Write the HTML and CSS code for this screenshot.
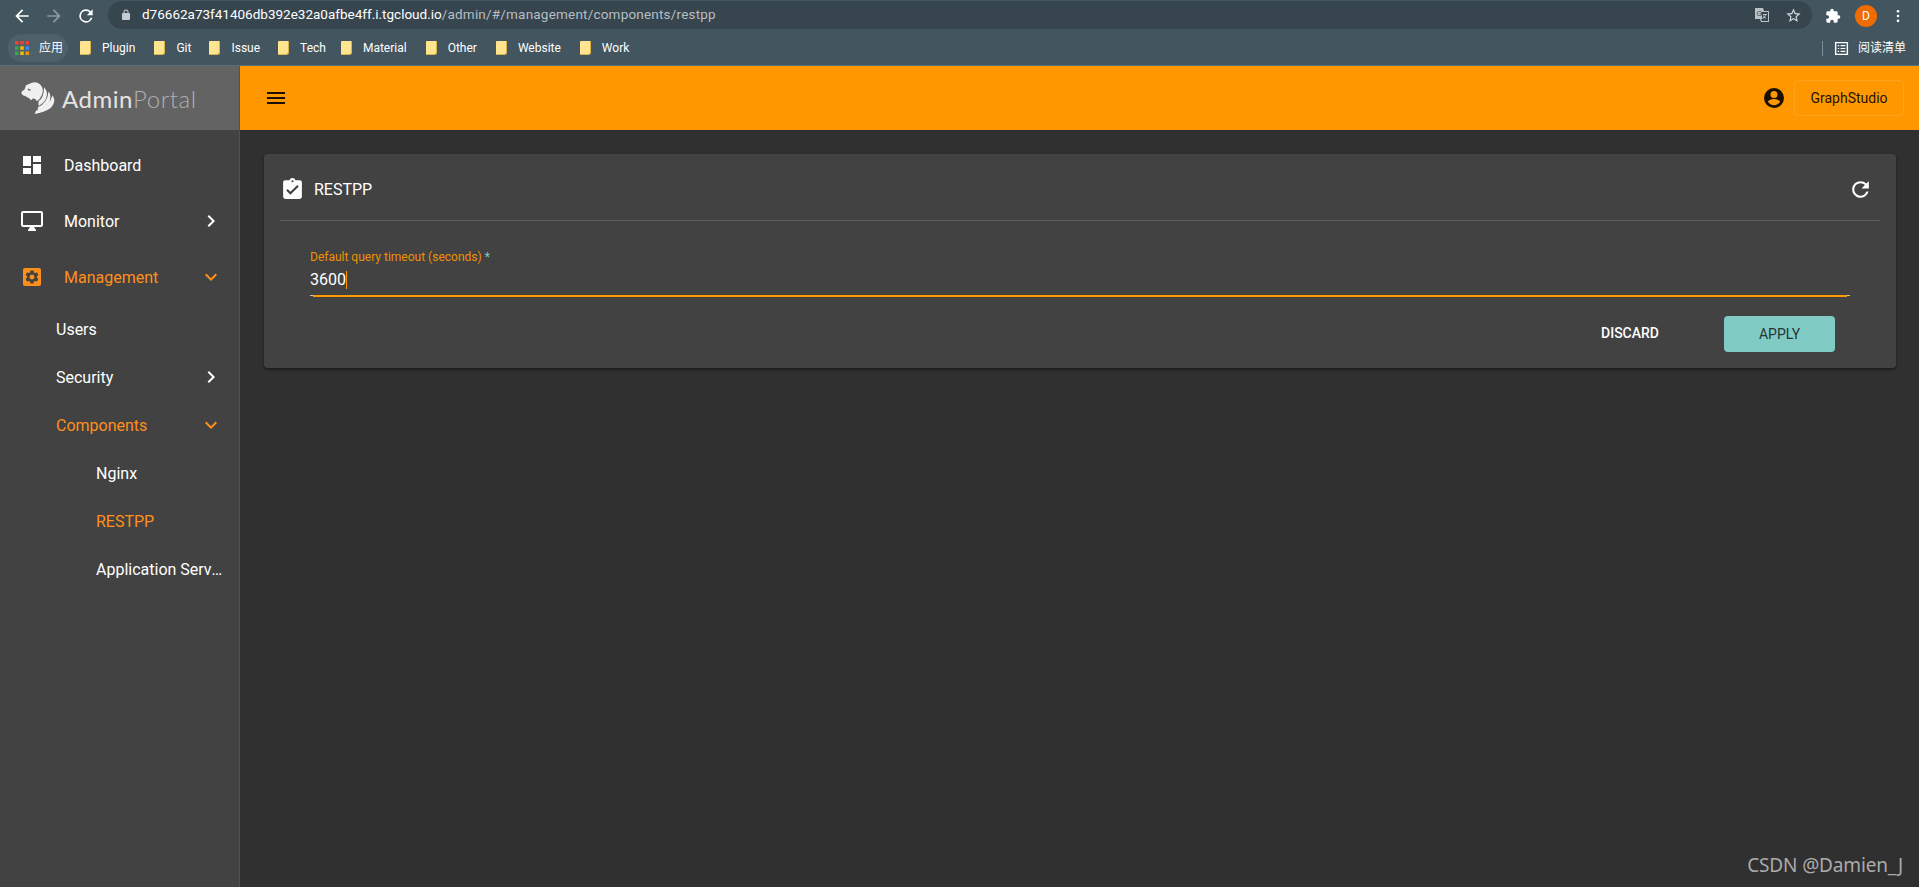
FILE: index.html
```html
<!DOCTYPE html>
<html lang="en">
<head>
<meta charset="utf-8">
<title>RESTPP - AdminPortal</title>
<link rel="stylesheet" href="styles.css">
</head>
<body>
<div class="chrome">
  <div class="toolbar">
    <div class="nav-btns">
      <svg class="ic20" viewBox="0 0 24 24"><path fill="#fff" d="M20 11H7.800l5.600-5.600L12 4l-8 8 8 8 1.400-1.400L7.800 13H20z"/></svg>
      <svg class="ic20" viewBox="0 0 24 24"><path fill="#8d9aa2" d="M4 11h12.200l-5.600-5.600L12 4l8 8-8 8-1.400-1.400 5.600-5.600H4z"/></svg>
      <svg class="ic20" viewBox="0 0 24 24"><path fill="#fff" d="M17.650 6.350A8 8 0 1 0 19.730 14h-2.080A6 6 0 1 1 12 6c1.660 0 3.140.69 4.220 1.780L13 11h7V4z"/></svg>
    </div>
    <div class="omnibox">
      <svg class="lock" viewBox="0 0 24 24"><path fill="#c4ccd1" d="M18 8h-1V6a5 5 0 0 0-10 0v2H6a2 2 0 0 0-2 2v10a2 2 0 0 0 2 2h12a2 2 0 0 0 2-2V10a2 2 0 0 0-2-2zM9 6a3 3 0 0 1 6 0v2H9z"/></svg>
      <span class="url"><span class="host">d76662a73f41406db392e32a0afbe4ff.i.tgcloud.io</span><span class="path">/admin/#/management/components/restpp</span></span>
      <svg class="translate" viewBox="0 0 16 16"><path fill="#b9c1c6" d="M1 1h8l1 3h5v11H7l-1-3H1z"/><path fill="#37454e" d="M7 5h7v9H8l-1-2h1.500z"/><text x="2.400" y="9" class="tr-g">G</text><path fill="#b9c1c6" d="M9 7h4v1h-1a5 5 0 0 1-1 2l1 1-.6.7-1-1-1.200 1-.6-.7 1.200-1a4 4 0 0 1-.8-1.500h1a3 3 0 0 0 .5 1 3 3 0 0 0 .6-1.500H9z"/></svg>
      <svg class="star" viewBox="0 0 24 24"><path fill="#d5dade" d="M22 9.240l-7.190-.62L12 2 9.190 8.630 2 9.240l5.460 4.730L5.820 21 12 17.270 18.180 21l-1.630-7.030zM12 15.400l-3.760 2.270 1-4.280-3.320-2.880 4.380-.38L12 6.100l1.710 4.040 4.380.38-3.320 2.880 1 4.280z"/></svg>
    </div>
    <div class="ext">
      <svg class="ic16" viewBox="0 0 24 24"><path fill="#fff" d="M20.500 11H19V7a2 2 0 0 0-2-2h-4V3.500a2.500 2.500 0 0 0-5 0V5H4a2 2 0 0 0-2 2v3.800h1.500a2.700 2.700 0 0 1 0 5.400H2V20a2 2 0 0 0 2 2h3.800v-1.500a2.700 2.700 0 0 1 5.400 0V22H17a2 2 0 0 0 2-2v-4h1.500a2.500 2.500 0 0 0 0-5z"/></svg>
      <span class="avatar">D</span>
      <svg class="dots" viewBox="0 0 4 16"><circle cx="2" cy="2.500" r="1.500"/><circle cx="2" cy="8" r="1.500"/><circle cx="2" cy="13.500" r="1.500"/></svg>
    </div>
  </div>
  <div class="bookmarks">
    <span class="apps">
      <svg class="apps-grid" viewBox="0 0 12 12">
        <rect x="0" y="0" width="3" height="3" fill="#ea4335"/><rect x="4.500" y="0" width="3" height="3" fill="#ea4335"/><rect x="9" y="0" width="3" height="3" fill="#ea4335"/>
        <rect x="0" y="4.500" width="3" height="3" fill="#34a853"/><rect x="4.500" y="4.500" width="3" height="3" fill="#fbbc05"/><rect x="9" y="4.500" width="3" height="3" fill="#4285f4"/>
        <rect x="0" y="9" width="3" height="3" fill="#34a853"/><rect x="4.500" y="9" width="3" height="3" fill="#fbbc05"/><rect x="9" y="9" width="3" height="3" fill="#f59300"/>
      </svg>应用
    </span>
    <span class="bm"><i class="folder"></i>Plugin</span>
    <span class="bm bm-narrow"><i class="folder"></i>Git</span>
    <span class="bm bm-narrow"><i class="folder"></i>Issue</span>
    <span class="bm bm-tight"><i class="folder"></i>Tech</span>
    <span class="bm"><i class="folder"></i>Material</span>
    <span class="bm"><i class="folder"></i>Other</span>
    <span class="bm"><i class="folder"></i>Website</span>
    <span class="bm"><i class="folder"></i>Work</span>
    <span class="reading">
      <svg class="ic15" viewBox="0 0 16 16"><path fill="none" stroke="#fff" stroke-width="1.500" d="M1.750 1.750h12.500v12.500H1.750z"/><path stroke="#fff" stroke-width="1.300" d="M4 5h1.500M7 5h5M4 8h1.500M7 8h5M4 11h1.500M7 11h5"/></svg>阅读清单
    </span>
  </div>
</div>

<div class="app">
  <aside class="sidebar">
    <div class="brand">
      <svg class="tiger" viewBox="0 0 132 120">
        <path fill="#f0f0f0" fill-rule="evenodd" d="M30 22 48 14Q66 10 76 24 84 36 78 50 72 64 62 70 60 60 50 62 42 70 42 62 30 54 18 50L16 42 26 34ZM34 31 47 36 38 38Z"/>
        <path fill="#f0f0f0" d="M84 28Q100 44 88 66 82 76 68 84 66 76 68 70 84 60 84 28Z"/>
        <path fill="#f0f0f0" d="M98 40Q110 58 96 78 84 92 66 100 64 94 66 88 94 76 98 40Z"/>
        <path fill="#f0f0f0" d="M110 52Q122 72 104 90 84 104 56 108 58 102 60 98 100 86 110 52Z"/>
      </svg>
      <span class="brand-text"><span class="admin">Admin</span><span class="portal">Portal</span></span>
    </div>
    <nav class="nav">
      <a class="item"><svg class="nav-ic" viewBox="0 0 24 24"><path d="M3 13h8V3H3zm0 8h8v-6H3zm10 0h8V11h-8zm0-18v6h8V3z"/></svg><span class="label">Dashboard</span></a>
      <a class="item"><svg class="nav-ic" viewBox="0 0 24 24"><path d="M21 2H3a2 2 0 0 0-2 2v12a2 2 0 0 0 2 2h7l-2 3v1h8v-1l-2-3h7a2 2 0 0 0 2-2V4a2 2 0 0 0-2-2zm0 14H3V4h18z"/></svg><span class="label">Monitor</span><svg class="chev" viewBox="0 0 24 24"><path d="M10 6 8.590 7.410 13.170 12l-4.580 4.590L10 18l6-6z"/></svg></a>
      <a class="item active"><svg class="nav-ic" viewBox="0 0 24 24"><rect x="3" y="3" width="18" height="18" rx="2"/><path class="gear" transform="translate(12 12) scale(.68) translate(-12 -12)" d="M19.140 12.940c.04-.3.06-.61.06-.94 0-.32-.02-.64-.07-.94l2.030-1.580c.18-.14.23-.41.12-.61l-1.920-3.320c-.12-.22-.37-.29-.59-.22l-2.390.96c-.5-.38-1.030-.7-1.620-.94l-.36-2.540c-.04-.24-.24-.41-.48-.41h-3.840c-.24 0-.43.17-.47.41l-.36 2.540c-.59.24-1.130.57-1.620.94l-2.390-.96c-.22-.08-.47 0-.59.22L2.740 8.870c-.12.21-.08.47.12.61l2.030 1.580c-.05.3-.09.63-.09.94s.02.64.07.94l-2.030 1.580c-.18.14-.23.41-.12.61l1.920 3.320c.12.22.37.29.59.22l2.390-.96c.5.38 1.030.7 1.620.94l.36 2.540c.05.24.24.41.48.41h3.840c.24 0 .44-.17.47-.41l.36-2.540c.59-.24 1.130-.56 1.620-.94l2.390.96c.22.08.47 0 .59-.22l1.920-3.320c.12-.22.07-.47-.12-.61l-2.010-1.580zM12 15.600c-1.980 0-3.600-1.620-3.600-3.600s1.620-3.600 3.600-3.600 3.600 1.620 3.600 3.600-1.620 3.600-3.600 3.600z"/></svg><span class="label">Management</span><svg class="chev" viewBox="0 0 24 24"><path d="M16.590 8.590 12 13.170 7.410 8.590 6 10l6 6 6-6z"/></svg></a>
      <a class="sub"><span class="label">Users</span></a>
      <a class="sub"><span class="label">Security</span><svg class="chev" viewBox="0 0 24 24"><path d="M10 6 8.590 7.410 13.170 12l-4.580 4.590L10 18l6-6z"/></svg></a>
      <a class="sub active"><span class="label">Components</span><svg class="chev" viewBox="0 0 24 24"><path d="M16.590 8.590 12 13.170 7.410 8.590 6 10l6 6 6-6z"/></svg></a>
      <a class="subsub"><span class="label">Nginx</span></a>
      <a class="subsub active"><span class="label">RESTPP</span></a>
      <a class="subsub"><span class="label">Application Server</span></a>
    </nav>
  </aside>
  <div class="right">
    <header class="topbar">
      <svg class="menu" viewBox="0 0 24 24"><path d="M3 18h18v-2H3zm0-5h18v-2H3zm0-7v2h18V6z"/></svg>
      <div class="top-actions">
        <svg class="account" viewBox="0 0 24 24"><path d="M12 2a10 10 0 1 0 0 20 10 10 0 0 0 0-20zm0 3a3.500 3.500 0 1 1 0 7 3.500 3.500 0 0 1 0-7zm0 14.200a7.500 7.500 0 0 1-6-3.200c0-2 4-3.100 6-3.100s6 1.100 6 3.100a7.500 7.500 0 0 1-6 3.200z"/></svg>
        <button class="gs">GraphStudio</button>
      </div>
    </header>
    <main class="main">
      <section class="card">
        <div class="card-head">
          <svg class="head-ic" viewBox="0 0 24 24"><path fill="#fff" d="M19 3h-4.180C14.400 1.840 13.300 1 12 1s-2.400.84-2.820 2H5a2 2 0 0 0-2 2v14a2 2 0 0 0 2 2h14a2 2 0 0 0 2-2V5a2 2 0 0 0-2-2zm-7 0a1 1 0 1 1 0 2 1 1 0 0 1 0-2z"/><path fill="#424242" d="m10 17-4-4 1.410-1.410L10 14.170l6.590-6.590L18 9z"/></svg>
          <h1 class="title">RESTPP</h1>
          <svg class="refresh" viewBox="0 0 24 24"><path fill="#fff" d="M17.650 6.350A7.960 7.960 0 0 0 12 4a8 8 0 1 0 7.730 10h-2.080A6 6 0 1 1 12 6c1.660 0 3.140.69 4.220 1.780L13 11h7V4z"/></svg>
        </div>
        <div class="card-body">
          <div class="field">
            <div class="field-label">Default query timeout (seconds) <span class="req">*</span></div>
            <div class="field-value">3600<i class="caret"></i></div>
            <div class="underline"></div>
          </div>
          <div class="actions">
            <button class="discard">DISCARD</button>
            <button class="apply">APPLY</button>
          </div>
        </div>
      </section>
    </main>
  </div>
</div>
<div class="watermark">CSDN @Damien_J</div>
</body>
</html>
```
FILE: styles.css
```css
* { box-sizing: border-box; }
html, body { margin: 0; height: 100%; }
body {
  display: flex;
  flex-direction: column;
  height: 887px;
  overflow: hidden;
  font-family: Roboto, "Noto Sans CJK SC", sans-serif;
  background: #303030;
  color: #fff;
  position: relative;
}
svg { display: block; flex: none; }
.ic16 { width: 16px; height: 16px; }
.ic15 { width: 15px; height: 15px; }
.ic20 { width: 20px; height: 20px; }

.chrome { flex: none; height: 66px; background: #43555f; border-bottom: 1px solid #5c6d77; }
.toolbar { height: 31px; display: flex; align-items: center; padding-left: 12px; }
.nav-btns { display: flex; gap: 12px; width: 96px; }
.omnibox {
  width: 1704px; height: 28px; margin-top: -1px;
  background: #37454e; border-radius: 14px;
  display: flex; align-items: center; padding-left: 12px;
}
.lock { width: 12px; height: 12px; }
.url { font: 13.500px/1 Roboto, sans-serif; margin-left: 10px; flex: 1; white-space: nowrap; }
.host { color: #fff; }
.path { color: #b6bec3; letter-spacing: .2px; }
.translate { width: 16px; height: 16px; margin-right: 15px; }
.tr-g { font: 7px "Liberation Sans", sans-serif; fill: #37454e; }
.star { width: 17px; height: 17px; margin-right: 10px; }
.ext { display: flex; align-items: center; margin-left: 13px; }
.avatar {
  width: 22px; height: 22px; border-radius: 50%; background: #ef6c00;
  font: 12px/22px Roboto, sans-serif; text-align: center; margin-left: 14px;
}
.dots { width: 4px; height: 14px; margin-left: 19px; fill: #fff; }

.bookmarks {
  height: 34px; display: flex; align-items: center; padding-left: 8px;
  font: 12px/1 Roboto, "Noto Sans CJK SC", sans-serif; color: #fff;
}
.apps {
  display: flex; align-items: center; gap: 10px; height: 28px; width: 60px;
  background: #4e606a; border-radius: 14px; padding-left: 7px; margin-right: 12px;
}
.apps-grid { width: 14px; height: 14px; }
.bm { display: flex; align-items: center; margin-right: 19px; }
.bm-narrow { margin-right: 18px; }
.bm-tight { margin-right: 15px; }
.folder {
  display: block; width: 11px; height: 14px; margin-right: 11px;
  border-radius: 1px 1px 3px 1px;
  background: #ffe590;
  border-right: 1px solid #d9b54c; border-bottom: 1px solid #d9b54c;
}
.reading {
  margin-left: auto; display: flex; align-items: center; gap: 9px;
  border-left: 1px solid #7f8e97; height: 15px; padding-left: 11px; margin-right: 13px;
}

.app { flex: 1; display: flex; min-height: 0; }
.sidebar { width: 240px; flex: none; background: #424242; border-right: 1px solid #525252; }
.brand {
  height: 64px; background: #636363; display: flex; align-items: center; padding-left: 16px; gap: 2px;
}
.tiger { width: 44px; height: 40px; }
.brand-text { font: 300 24px/1 Lato, sans-serif; letter-spacing: .55px; margin-top: 2px; }
.admin { color: #e4e4e4; font-weight: 400; }
.portal { color: #b0b0b0; font-weight: 300; }

.nav { padding-top: 7px; }
.item, .sub, .subsub {
  display: flex; align-items: center; font-size: 16px; font-weight: 400; color: #fff; fill: #fff;
}
.item { height: 56px; padding-left: 20px; }
.sub { height: 48px; padding-left: 56px; }
.subsub { height: 48px; padding-left: 96px; }
.active { color: #ff8f1a; fill: #ff8f1a; }
.gear { fill: #424242; }
.nav-ic { width: 24px; height: 24px; margin-right: 20px; }
.label { flex: 1; min-width: 0; white-space: nowrap; overflow: hidden; text-overflow: ellipsis; }
.chev { width: 24px; height: 24px; margin-right: 16px; }
.subsub .label { padding-right: 15px; }

.right { flex: 1; min-width: 0; display: flex; flex-direction: column; }
.topbar {
  height: 64px; flex: none; background: #ff9800; display: flex; align-items: center;
  padding: 0 15px 0 24px; justify-content: space-between;
}
.menu { width: 24px; height: 24px; fill: #1a0f00; }
.top-actions { display: flex; align-items: center; gap: 8px; }
.account { width: 24px; height: 24px; fill: #1a0f00; }
.gs {
  width: 110px; height: 36px; background: transparent; border: 1px solid #ffa31f; border-radius: 4px;
  font: 400 14px Roboto, sans-serif; color: #1f1300; padding: 0;
}
.main { flex: 1; padding: 24px 23px 0 24px; }
.card {
  height: 214px; background: #424242; border-radius: 4px;
  box-shadow: 0 2px 2px rgba(0,0,0,.25), 0 1px 3px rgba(0,0,0,.2);
  padding: 0 16px;
}
.card-head {
  height: 67px; display: flex; align-items: center; padding: 4px 7px 0 0;
  border-bottom: 1px solid #5d5d5d;
}
.head-ic { width: 25px; height: 25px; margin-right: 9px; }
.title { margin: 0; font: 400 16px Roboto, sans-serif; flex: 1; }
.refresh { width: 25px; height: 25px; }
.card-body { padding: 29px 30px 0; }
.field-label { font-size: 12px; line-height: 14px; color: #f09000; }
.req { color: #80cbc4; }
.field-value {
  font-size: 16px; line-height: 20px; margin-top: 6px; height: 25px;
  display: flex; align-items: flex-start; color: #fff;
}
.caret { display: block; width: 1px; height: 18px; background: #ff9800; margin-top: 1px; }
.underline {
  height: 2px;
  background:
    linear-gradient(#ff9800, #ff9800) center / calc(100% - 6px) 100% no-repeat,
    linear-gradient(#c8c8c8, #c8c8c8) 0 0 / 100% 1px no-repeat;
}
.actions { display: flex; justify-content: flex-end; align-items: center; margin-top: 19px; padding-right: 15px; }
.discard {
  background: none; border: 0; padding: 0; color: #fff; font: 500 14px Roboto, sans-serif;
  margin: 0 65px 2px 0;
}
.apply {
  width: 111px; height: 36px; border: 0; border-radius: 4px; background: #80cbc4;
  color: #263533; font: 400 14px Roboto, sans-serif; padding: 0;
}
.watermark {
  position: absolute; right: 16px; bottom: 9px;
  font: 19px "Noto Sans", sans-serif; color: #ababab; letter-spacing: -.15px;
}
```
